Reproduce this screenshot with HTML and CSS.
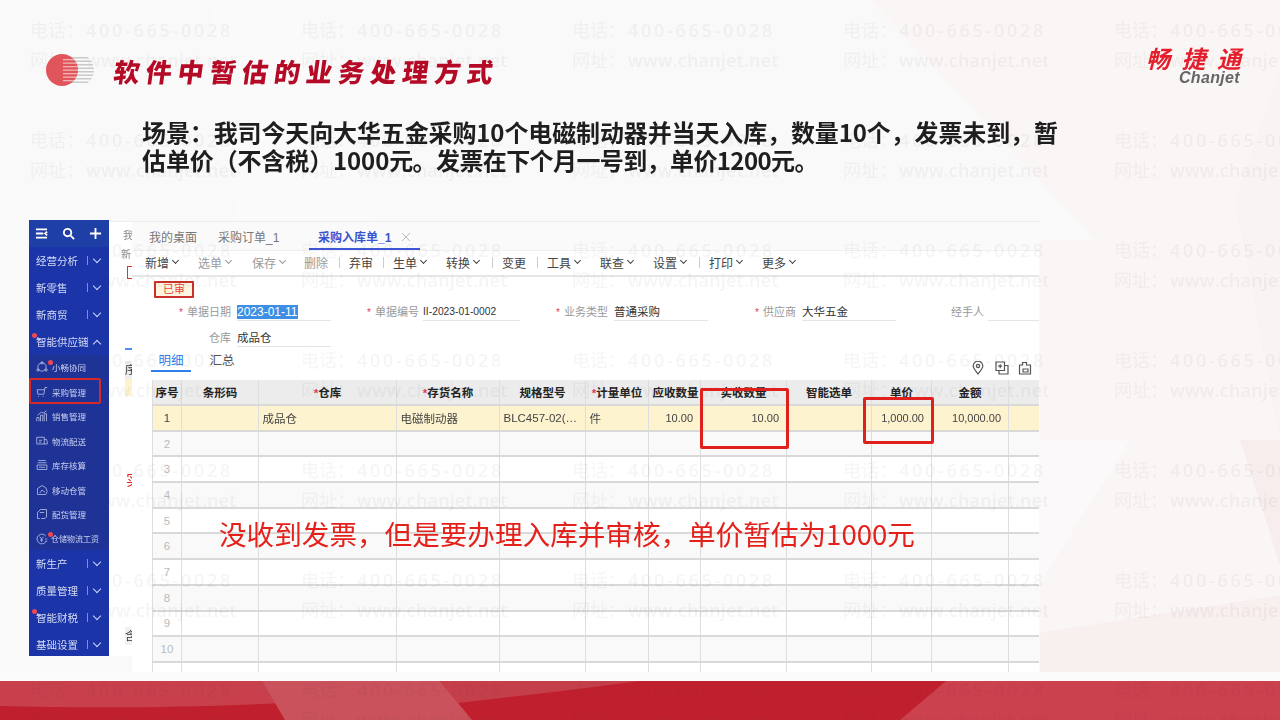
FILE: index.html
```html
<!DOCTYPE html>
<html lang="zh-CN">
<head>
<meta charset="utf-8">
<title>软件中暂估的业务处理方式</title>
<link rel="stylesheet" href="styles.css">
</head>
<body>
<main class="slide">
  <svg class="bg" viewBox="0 0 1280 720" aria-hidden="true">
    <rect width="1280" height="720" fill="#f9f9f9"/>
    <polygon points="210,0 300,0 380,240 240,240" fill="#fafafa"/>
    <polygon points="870,0 1280,0 1280,690 1040,690 1040,240 1095,240" fill="#faf6f6"/>
    <polygon points="1040,440 1130,440 1040,583" fill="#fbf9f9"/>
    <polygon points="1040,633 1280,595 1280,690 1040,690" fill="#f8efef"/>
    <polygon points="1240,440 1280,440 1280,565" fill="#f7eded"/>
    <polygon points="1235,200 1280,70 1280,440" fill="#f9f3f3"/>
    <polygon points="0,672 1280,672 1280,682 0,682" fill="#fbfbfb"/>
    <rect y="681" width="1280" height="39" fill="#c0202d"/>
    <path d="M0 681H265L282 703C180 708 80 708 0 706Z" fill="#c8404b"/>
    <polygon points="262,681 440,681 472,720 285,720" fill="#c9525c"/>
    <polygon points="900,720 946,681 1280,681 1280,720" fill="#cb414d"/>
    <path d="M440 681H640L570 690L458 703Z" fill="#c43f4a"/>
  </svg>

  <aside class="back-page">
    <span class="back-text back-a">我</span>
    <span class="back-text back-b">新</span>
    <span class="back-red"></span>
    <span class="back-tab"></span>
    <span class="back-head">序</span>
    <span class="back-yellow"></span>
    <span class="back-note">实</span>
    <span class="back-foot">含</span>
  </aside>

  <section class="window">
    <nav class="tabs">
      <span class="tab tab-1">我的桌面</span>
      <span class="tab tab-2">采购订单_1</span>
      <span class="tab tab-active">采购入库单_1<svg class="tab-x" viewBox="0 0 10 10"><path d="M1 1l8 8M9 1l-8 8"/></svg></span>
    </nav>
    <div class="toolbar">
      <span class="tool w53">新增<i class="chev"></i></span>
      <span class="tool w54 dim">选单<i class="chev"></i></span>
      <span class="tool w52 dim">保存<i class="chev"></i></span>
      <span class="tool w45 dim sep">删除</span>
      <span class="tool w44 sep">弃审</span>
      <span class="tool w53">生单<i class="chev"></i></span>
      <span class="tool w56 sep">转换<i class="chev"></i></span>
      <span class="tool w45 sep">变更</span>
      <span class="tool w53">工具<i class="chev"></i></span>
      <span class="tool w53">联查<i class="chev"></i></span>
      <span class="tool w56 sep">设置<i class="chev"></i></span>
      <span class="tool w53">打印<i class="chev"></i></span>
      <span class="tool">更多<i class="chev"></i></span>
    </div>
    <div class="stamp">已审</div>
    <div class="form-row">
      <label class="lab l105"><b>*</b>单据日期</label><span class="val val-date v94"><em>2023-01-11</em></span>
      <label class="lab l92"><b>*</b>单据编号</label><span class="val val-code v97">II-2023-01-0002</span>
      <label class="lab l94"><b>*</b>业务类型</label><span class="val v94">普通采购</span>
      <label class="lab l94"><b>*</b>供应商</label><span class="val v94">大华五金</span>
      <label class="lab l92">经手人</label><span class="val v51"></span>
    </div>
    <div class="form-row form-row-2">
      <label class="lab l105">仓库</label><span class="val v94">成品仓</span>
    </div>
    <div class="subtabs">
      <span class="subtab subtab-on">明细</span>
      <span class="subtab">汇总</span>
      <span class="grid-icons">
        <svg viewBox="0 0 12 14"><path d="M6 13C3 9 1.2 7.2 1.2 5a4.8 4.8 0 0 1 9.600 0C10.800 7.200 9 9 6 13Z"/><circle cx="6" cy="5" r="1.600"/></svg>
        <svg viewBox="0 0 14 14"><path d="M1 1h8.500v8.500H1zM4 9.500V13h9V4.500H9.500M5.200 3.200v4M3.200 5.200h4"/></svg>
        <svg viewBox="0 0 14 14"><path d="M1.500 4h3V1.500h4V4h4v9h-11zM5 8h5v3H5z"/></svg>
      </span>
    </div>
    <table class="sheet">
      <colgroup><col class="c1"><col class="c2"><col class="c3"><col class="c4"><col class="c5"><col class="c6"><col class="c7"><col class="c8"><col class="c9"><col class="c10"><col class="c11"><col class="c12"></colgroup>
      <thead><tr><th>序号</th><th>条形码</th><th><b>*</b>仓库</th><th><b>*</b>存货名称</th><th>规格型号</th><th><b>*</b>计量单位</th><th>应收数量</th><th>实收数量</th><th>智能选单</th><th>单价</th><th>金额</th><th>损</th></tr></thead>
      <tbody>
        <tr class="on"><td class="no dark">1</td><td></td><td>成品仓</td><td>电磁制动器</td><td>BLC457-02(…</td><td>件</td><td class="num">10.00</td><td class="num">10.00</td><td></td><td class="num">1,000.00</td><td class="num">10,000.00</td><td></td></tr>
        <tr class="alt"><td class="no">2</td><td></td><td></td><td></td><td></td><td></td><td></td><td></td><td></td><td></td><td></td><td></td></tr>
        <tr><td class="no">3</td><td></td><td></td><td></td><td></td><td></td><td></td><td></td><td></td><td></td><td></td><td></td></tr>
        <tr class="alt"><td class="no">4</td><td></td><td></td><td></td><td></td><td></td><td></td><td></td><td></td><td></td><td></td><td></td></tr>
        <tr><td class="no">5</td><td></td><td></td><td></td><td></td><td></td><td></td><td></td><td></td><td></td><td></td><td></td></tr>
        <tr class="alt"><td class="no">6</td><td></td><td></td><td></td><td></td><td></td><td></td><td></td><td></td><td></td><td></td><td></td></tr>
        <tr><td class="no">7</td><td></td><td></td><td></td><td></td><td></td><td></td><td></td><td></td><td></td><td></td><td></td></tr>
        <tr class="alt"><td class="no">8</td><td></td><td></td><td></td><td></td><td></td><td></td><td></td><td></td><td></td><td></td><td></td></tr>
        <tr><td class="no">9</td><td></td><td></td><td></td><td></td><td></td><td></td><td></td><td></td><td></td><td></td><td></td></tr>
        <tr class="alt"><td class="no">10</td><td></td><td></td><td></td><td></td><td></td><td></td><td></td><td></td><td></td><td></td><td></td></tr>
        <tr><td class="no"></td><td></td><td></td><td></td><td></td><td></td><td></td><td></td><td></td><td></td><td></td><td></td></tr>
      </tbody>
    </table>
  </section>

  <div class="watermarks" aria-hidden="true">
    <p><span>电话&#xFF1A;<s>400-665-0028</s></span><span>网址&#xFF1A;<u>www.chanjet.net</u></span></p><p><span>电话&#xFF1A;<s>400-665-0028</s></span><span>网址&#xFF1A;<u>www.chanjet.net</u></span></p><p><span>电话&#xFF1A;<s>400-665-0028</s></span><span>网址&#xFF1A;<u>www.chanjet.net</u></span></p><p><span>电话&#xFF1A;<s>400-665-0028</s></span><span>网址&#xFF1A;<u>www.chanjet.net</u></span></p><p><span>电话&#xFF1A;<s>400-665-0028</s></span><span>网址&#xFF1A;<u>www.chanjet.net</u></span></p>
    <p><span>电话&#xFF1A;<s>400-665-0028</s></span><span>网址&#xFF1A;<u>www.chanjet.net</u></span></p><p><span>电话&#xFF1A;<s>400-665-0028</s></span><span>网址&#xFF1A;<u>www.chanjet.net</u></span></p><p><span>电话&#xFF1A;<s>400-665-0028</s></span><span>网址&#xFF1A;<u>www.chanjet.net</u></span></p><p><span>电话&#xFF1A;<s>400-665-0028</s></span><span>网址&#xFF1A;<u>www.chanjet.net</u></span></p><p><span>电话&#xFF1A;<s>400-665-0028</s></span><span>网址&#xFF1A;<u>www.chanjet.net</u></span></p>
    <p><span>电话&#xFF1A;<s>400-665-0028</s></span><span>网址&#xFF1A;<u>www.chanjet.net</u></span></p><p><span>电话&#xFF1A;<s>400-665-0028</s></span><span>网址&#xFF1A;<u>www.chanjet.net</u></span></p><p><span>电话&#xFF1A;<s>400-665-0028</s></span><span>网址&#xFF1A;<u>www.chanjet.net</u></span></p><p><span>电话&#xFF1A;<s>400-665-0028</s></span><span>网址&#xFF1A;<u>www.chanjet.net</u></span></p><p><span>电话&#xFF1A;<s>400-665-0028</s></span><span>网址&#xFF1A;<u>www.chanjet.net</u></span></p>
    <p><span>电话&#xFF1A;<s>400-665-0028</s></span><span>网址&#xFF1A;<u>www.chanjet.net</u></span></p><p><span>电话&#xFF1A;<s>400-665-0028</s></span><span>网址&#xFF1A;<u>www.chanjet.net</u></span></p><p><span>电话&#xFF1A;<s>400-665-0028</s></span><span>网址&#xFF1A;<u>www.chanjet.net</u></span></p><p><span>电话&#xFF1A;<s>400-665-0028</s></span><span>网址&#xFF1A;<u>www.chanjet.net</u></span></p><p><span>电话&#xFF1A;<s>400-665-0028</s></span><span>网址&#xFF1A;<u>www.chanjet.net</u></span></p>
    <p><span>电话&#xFF1A;<s>400-665-0028</s></span><span>网址&#xFF1A;<u>www.chanjet.net</u></span></p><p><span>电话&#xFF1A;<s>400-665-0028</s></span><span>网址&#xFF1A;<u>www.chanjet.net</u></span></p><p><span>电话&#xFF1A;<s>400-665-0028</s></span><span>网址&#xFF1A;<u>www.chanjet.net</u></span></p><p><span>电话&#xFF1A;<s>400-665-0028</s></span><span>网址&#xFF1A;<u>www.chanjet.net</u></span></p><p><span>电话&#xFF1A;<s>400-665-0028</s></span><span>网址&#xFF1A;<u>www.chanjet.net</u></span></p>
    <p><span>电话&#xFF1A;<s>400-665-0028</s></span><span>网址&#xFF1A;<u>www.chanjet.net</u></span></p><p><span>电话&#xFF1A;<s>400-665-0028</s></span><span>网址&#xFF1A;<u>www.chanjet.net</u></span></p><p><span>电话&#xFF1A;<s>400-665-0028</s></span><span>网址&#xFF1A;<u>www.chanjet.net</u></span></p><p><span>电话&#xFF1A;<s>400-665-0028</s></span><span>网址&#xFF1A;<u>www.chanjet.net</u></span></p><p><span>电话&#xFF1A;<s>400-665-0028</s></span><span>网址&#xFF1A;<u>www.chanjet.net</u></span></p>
    <p><span>电话&#xFF1A;<s>400-665-0028</s></span><span>网址&#xFF1A;<u>www.chanjet.net</u></span></p><p><span>电话&#xFF1A;<s>400-665-0028</s></span><span>网址&#xFF1A;<u>www.chanjet.net</u></span></p><p><span>电话&#xFF1A;<s>400-665-0028</s></span><span>网址&#xFF1A;<u>www.chanjet.net</u></span></p><p><span>电话&#xFF1A;<s>400-665-0028</s></span><span>网址&#xFF1A;<u>www.chanjet.net</u></span></p><p><span>电话&#xFF1A;<s>400-665-0028</s></span><span>网址&#xFF1A;<u>www.chanjet.net</u></span></p>
  </div>

  <header class="title">
    <svg class="title-mark" viewBox="0 0 48 32" aria-hidden="true">
      <defs>
        <clipPath id="disc-gray"><circle cx="32" cy="16" r="16"/></clipPath>
        <clipPath id="disc-red"><ellipse cx="16" cy="16" rx="16" ry="16"/></clipPath>
      </defs>
      <g clip-path="url(#disc-gray)" fill="#c9c9c9">
        <rect x="16" y="3" width="32" height="1.500"/><rect x="16" y="6.500" width="32" height="1.500"/><rect x="16" y="10" width="32" height="1.500"/><rect x="16" y="13.500" width="32" height="1.500"/><rect x="16" y="17" width="32" height="1.500"/><rect x="16" y="20.500" width="32" height="1.500"/><rect x="16" y="24" width="32" height="1.500"/><rect x="16" y="27.500" width="32" height="1.500"/>
      </g>
      <circle cx="16" cy="16" r="16" fill="#e0555c"/>
      <g clip-path="url(#disc-red)" fill="#f1b4b6">
        <rect x="17" y="5" width="15" height="1.300"/><rect x="17" y="8.500" width="15" height="1.300"/><rect x="17" y="12" width="15" height="1.300"/><rect x="17" y="15.500" width="15" height="1.300"/><rect x="17" y="19" width="15" height="1.300"/><rect x="17" y="22.500" width="15" height="1.300"/><rect x="17" y="26" width="15" height="1.300"/>
      </g>
    </svg>
    <h1>软件中暂估的业务处理方式</h1>
  </header>

  <div class="logo"><strong>畅捷通</strong><span>Chanjet</span></div>

  <p class="scene">场景&#xFF1A;我司今天向大华五金采购10个电磁制动器并当天入库&#xFF0C;数量10个&#xFF0C;发票未到&#xFF0C;暂<br>估单价&#xFF08;不含税&#xFF09;1000<span class="tight">元。发票在下个月一号到&#xFF0C;单价1200元。</span></p>

  <nav class="sidebar">
    <div class="side-top">
      <svg viewBox="0 0 14 12"><path d="M1 1.500h12M1 6h8M1 10.500h12M13 4l-2 2 2 2"/></svg>
      <svg viewBox="0 0 14 14"><circle cx="6" cy="6" r="4"/><path d="M9 9l4 4"/></svg>
      <svg viewBox="0 0 14 14"><path d="M7 1v12M1 7h12"/></svg>
    </div>
    <a class="side-item">经营分析<i class="bar"></i><i class="chev"></i></a>
    <a class="side-item">新零售<i class="bar"></i><i class="chev"></i></a>
    <a class="side-item">新商贸<i class="bar"></i><i class="chev"></i></a>
    <a class="side-item side-open dot">智能供应链<i class="bar"></i><i class="chev chev-up"></i></a>
    <div class="side-sub">
      <a class="sub-item dot2"><svg viewBox="0 0 16 16"><circle cx="8" cy="8" r="5.500"/><circle cx="8" cy="2.500" r="1.500"/><circle cx="2.500" cy="12" r="1.500"/><circle cx="13.500" cy="12" r="1.500"/></svg>小畅协同</a>
      <a class="sub-item"><svg viewBox="0 0 16 16"><path d="M15 2H12L10.500 11H2.500L1.500 5H11M3 14h1M9 14h1"/></svg>采购管理</a>
      <a class="sub-item"><svg viewBox="0 0 16 16"><path d="M1 15V10h3v5M6 15V7h3v8M11 15V5h3v10M2 7l5-4 3 1 4-3"/></svg>销售管理</a>
      <a class="sub-item"><svg viewBox="0 0 16 16"><path d="M1 3h10v9H1zM11 6h3l1 3v3h-4M4 7h4M4 9.500h3"/></svg>物流配送</a>
      <a class="sub-item"><svg viewBox="0 0 16 16"><path d="M3 2h10M2 5h12M1.500 8h13v6h-13zM4 11h8"/></svg>库存核算</a>
      <a class="sub-item"><svg viewBox="0 0 16 16"><path d="M2 14V6l6-4 5 3 2 5-2 4zM5 12l3-4 4 3"/></svg>移动仓管</a>
      <a class="sub-item"><svg viewBox="0 0 16 16"><path d="M2 14V6l4-4h8v10l-2 2H7M2 14h3M5 6h6"/></svg>配货管理</a>
      <a class="sub-item dot2 wide"><svg viewBox="0 0 16 16"><path d="M13 4a6.500 6.500 0 1 0 0 8M5 5l2.500 3L10 5M7.500 8v4M5.500 9.500h4M12 8h3M12 11h3"/></svg>仓储物流工资</a>
    </div>
    <a class="side-item">新生产<i class="bar"></i><i class="chev"></i></a>
    <a class="side-item">质量管理<i class="bar"></i><i class="chev"></i></a>
    <a class="side-item dot">智能财税<i class="bar"></i><i class="chev"></i></a>
    <a class="side-item">基础设置<i class="bar"></i><i class="chev"></i></a>
  </nav>

  <span class="mark mark-menu"></span>
  <span class="mark mark-qty"></span>
  <span class="mark mark-price"></span>
  <p class="note">没收到发票&#xFF0C;但是要办理入库并审核&#xFF0C;单价暂估为1000元</p>
</main>
</body>
</html>
```
FILE: styles.css
```css
* { box-sizing: border-box; margin: 0; padding: 0; }
html, body { width: 1280px; height: 720px; overflow: hidden; background: #f9f9f9; }
body { font-family: "Liberation Sans", "Noto Sans CJK SC", sans-serif; color: #333; }
i, em, u, s { font-style: normal; text-decoration: none; }

.slide { position: relative; width: 1280px; height: 720px; overflow: hidden; }
.bg { position: absolute; inset: 0; width: 1280px; height: 720px; }

/* page behind the foreground window */
.back-page { position: absolute; left: 109px; top: 221px; width: 23px; height: 435px; background: #fff; border-top: 1px solid #eee; font-size: 10px; color: #888; overflow: hidden; filter: blur(.3px); }
.back-page > * { position: absolute; }
.back-a { left: 14px; top: 5px; }
.back-b { left: 12px; top: 24px; }
.back-red { left: 18px; top: 44px; width: 8px; height: 13px; border: 1.5px solid #d9362f; }
.back-tab { left: 16px; top: 118px; width: 8px; height: 10px; border-bottom: 2px solid #4f8df0; }
.back-head { left: 16px; top: 139px; width: 8px; background: #ececec; height: 18px; font-size: 11px; color: #333; }
.back-yellow { left: 16px; top: 157px; width: 8px; height: 17px; background: #fdf3cf; }
.back-note { left: 17px; top: 246px; font-size: 15px; color: #e3231b; }
.back-foot { left: 16px; top: 405px; width: 8px; height: 18px; font-size: 11px; color: #333; background: #f1f1f1; overflow: hidden; }

/* foreground window */
.window { position: absolute; left: 132px; top: 221px; width: 907px; height: 451px; overflow: hidden; background: #fff; font-family: "Liberation Sans", "Noto Sans CJK SC", sans-serif; filter: blur(.3px); }
.tabs { display: flex; height: 29px; align-items: flex-end; background: #fafafa; border-top: 1px solid #ececec; font-size: 12px; color: #777; }
.tab { height: 28px; line-height: 33px; }
.tab-1 { margin-left: 17px; width: 69px; }
.tab-2 { width: 91px; }
.tab-active { width: 111px; padding-left: 9px; color: #3a55d0; font-weight: 700; border-bottom: 2px solid #3f56d8; }
.tab-x { width: 10px; height: 10px; margin-left: 10px; fill: none; stroke: #bbb; stroke-width: 1; }

.toolbar { display: flex; align-items: center; height: 27px; padding: 0 0 2px 13px; border-bottom: 2px solid #e6e6e6; border-top: 1px solid #f0f0f0; font-size: 12px; color: #444; }
.tool { display: flex; align-items: center; flex: none; position: relative; }
.tool .chev { margin: -3px 0 0 4px; }
.dim { color: #999; }
.sep::after { content: ""; position: absolute; right: 9px; top: 3px; height: 11px; width: 1px; background: #ccc; }
.w44 { width: 44px; } .w45 { width: 45px; } .w52 { width: 52px; } .w53 { width: 53px; } .w54 { width: 54px; } .w56 { width: 56px; }

.chev { display: inline-block; width: 5px; height: 5px; border-right: 1.5px solid currentColor; border-bottom: 1.5px solid currentColor; transform: rotate(45deg); flex: none; }
.chev-up { transform: rotate(225deg); margin-top: 3px; }

.stamp { width: 40px; height: 17px; margin: 4px 0 0 22px; border: 2px solid #c9302a; border-radius: 1px; background: #fdf5e0; color: #e8453c; font-size: 11px; line-height: 13px; text-align: center; }

.form-row { display: flex; height: 23px; align-items: flex-end; }
.form-row-2 { height: 26px; }
.lab { flex: none; height: 18px; line-height: 19px; text-align: right; color: #999; font-size: 11px; padding-right: 6px; }
.lab b { color: #e0405a; font-weight: 400; margin-right: 4px; font-size: 10px; }
.val { flex: none; height: 18px; line-height: 19px; border-bottom: 1px solid #e4e4e4; color: #333; font-size: 11.500px; }
.val-date em { background: #3d8fe6; color: #fff; font-size: 12px; display: inline-block; line-height: 14px; }
.val-code { font-size: 10.300px; line-height: 17px; }
.l92 { width: 92px; padding-right: 4px; } .l94 { width: 94px; } .l105 { width: 105px; }
.v51 { width: 51px; } .v94 { width: 94px; } .v97 { width: 97px; }

.subtabs { display: flex; position: relative; height: 33px; margin-left: 19px; font-size: 12.500px; color: #555; }
.subtab { width: 40px; height: 25px; line-height: 28px; text-align: center; margin-right: 11px; border-bottom: 2px solid transparent; }
.subtab-on { color: #2f80e8; border-bottom-color: #2f80e8; }
.grid-icons { position: absolute; left: 820px; top: 14px; display: flex; gap: 9.500px; }
.grid-icons svg { width: 14px; height: 14px; fill: none; stroke: #555; stroke-width: 1.200; }

.sheet { margin-left: 20px; border-collapse: collapse; table-layout: fixed; width: 1000px; font-size: 11.500px; color: #444; }
.c1 { width: 29px; } .c2 { width: 77px; } .c3 { width: 138px; } .c4 { width: 103px; } .c5 { width: 86px; } .c6 { width: 63px; } .c7 { width: 52px; } .c8 { width: 86px; } .c9 { width: 85px; } .c10 { width: 60px; } .c11 { width: 77px; } .c12 { width: 144px; }
.sheet th, .sheet td { height: 25.700px; border-right: 1px solid #dedede; border-bottom: 2px solid #d9d9d9; padding: 0 3.500px; white-space: nowrap; overflow: hidden; }
.sheet th:first-child, .sheet td:first-child { border-left: 1px solid #dedede; padding: 0; text-align: center; }
.sheet th { background: #ececec; color: #222; font-weight: 700; text-align: center; height: 25px; }
.sheet th b { color: #e0405a; }
.on td { background: #fdf3cf; }
.alt td { background: #f9f9f9; }
.sheet .no { color: #bbb; }
.sheet .dark { color: #444; }
.sheet .num { text-align: right; padding-right: 7px; font-size: 11px; }

/* watermark */
.watermarks { position: absolute; left: 30px; top: 15px; display: grid; grid-template-columns: repeat(5, 271px); grid-auto-rows: 110px; width: 1355px; pointer-events: none; color: rgba(70, 50, 50, .05); font-family: "Open Sans", "Noto Sans CJK SC", sans-serif; font-size: 18px; }
.watermarks p { display: flex; flex-direction: column; }
.watermarks span { display: block; white-space: nowrap; line-height: 30px; }
.watermarks s { margin-left: 2px; letter-spacing: 2.700px; font-weight: 600; }
.watermarks u { margin-left: 2px; letter-spacing: .2px; font-weight: 600; }

/* slide title */
.title { position: absolute; left: 46px; top: 54px; display: flex; align-items: center; gap: 20px; height: 32px; }
.title-mark { width: 48px; height: 32px; flex: none; }
.title h1 { font-family: "Noto Sans CJK SC", sans-serif; font-weight: 900; font-size: 26px; letter-spacing: 6.100px; color: #b50a26; transform: skewX(-8deg); white-space: nowrap; }

.logo { position: absolute; left: 1146px; top: 43px; width: 98px; font-style: italic; }
.logo strong { display: block; font-family: "Noto Sans CJK SC", sans-serif; font-size: 24px; line-height: 29px; font-weight: 700; letter-spacing: 11.500px; white-space: nowrap; color: #e41e2b; }
.logo span { display: block; margin: -1px 0 0 33px; font-family: "Liberation Sans", sans-serif; font-size: 16px; line-height: 13px; font-weight: 700; letter-spacing: .300px; color: #666; white-space: nowrap; }

.scene { position: absolute; left: 142px; top: 118px; width: 930px; font-family: "Noto Sans CJK SC", sans-serif; font-weight: 700; font-size: 24px; line-height: 28px; letter-spacing: -.120px; color: #1e1e1e; white-space: nowrap; }
.tight { letter-spacing: -.6px; }

.note { position: absolute; left: 219px; top: 514px; font-family: "Noto Sans CJK SC", sans-serif; font-size: 27.600px; line-height: 38px; color: #e4201a; white-space: nowrap; }

/* sidebar */
.sidebar { position: absolute; left: 29px; top: 220px; width: 80px; height: 436px; display: flex; flex-direction: column; background: #1b35a8; font-family: "Noto Sans CJK SC", sans-serif; color: #d6dcf3; overflow: hidden; filter: blur(.3px); }
.side-top { display: flex; align-items: center; height: 27px; padding-left: 6px; background: #1e3fa5; flex: none; gap: 14px; }
.side-top svg { width: 13px; height: 13px; fill: none; stroke: #fff; stroke-width: 2; flex: none; }
.side-item { position: relative; display: flex; align-items: center; flex: none; height: 27px; padding-left: 7px; font-size: 10.500px; }
.bar { position: absolute; left: 58px; top: 9px; width: 1px; height: 9px; background: #7f90d8; }
.side-item .chev { position: absolute; left: 65px; top: 9px; width: 6px; height: 6px; color: #cdd5f2; transform: rotate(45deg); margin: 0; }
.side-item .chev-up { transform: rotate(225deg); top: 13px; }
.dot::before { content: ""; position: absolute; left: 3px; top: 5px; width: 5px; height: 5px; border-radius: 50%; background: #f0484e; }
.side-sub { display: flex; flex-direction: column; flex: none; height: 195px; background: #1f3296; }
.sub-item { position: relative; display: flex; align-items: center; flex: none; height: 24.500px; padding-left: 7px; gap: 4px; font-size: 8.500px; color: #c9d0ee; white-space: nowrap; }
.sub-item svg { width: 12px; height: 12px; flex: none; fill: none; stroke: #c4cced; stroke-width: 1; }
.dot2::after { content: ""; position: absolute; left: 19px; top: 5px; width: 5px; height: 5px; border-radius: 50%; background: #f0484e; }
.wide { font-size: 8px; gap: 3px; }

/* annotation boxes */
.mark { position: absolute; border: 3px solid #e0201c; border-radius: 2px; }
.mark-menu { left: 29px; top: 378px; width: 72px; height: 26px; border-width: 2px; border-color: #d42a2a; }
.mark-qty { left: 700px; top: 388px; width: 89px; height: 61px; }
.mark-price { left: 863px; top: 397px; width: 71px; height: 47px; }
```
